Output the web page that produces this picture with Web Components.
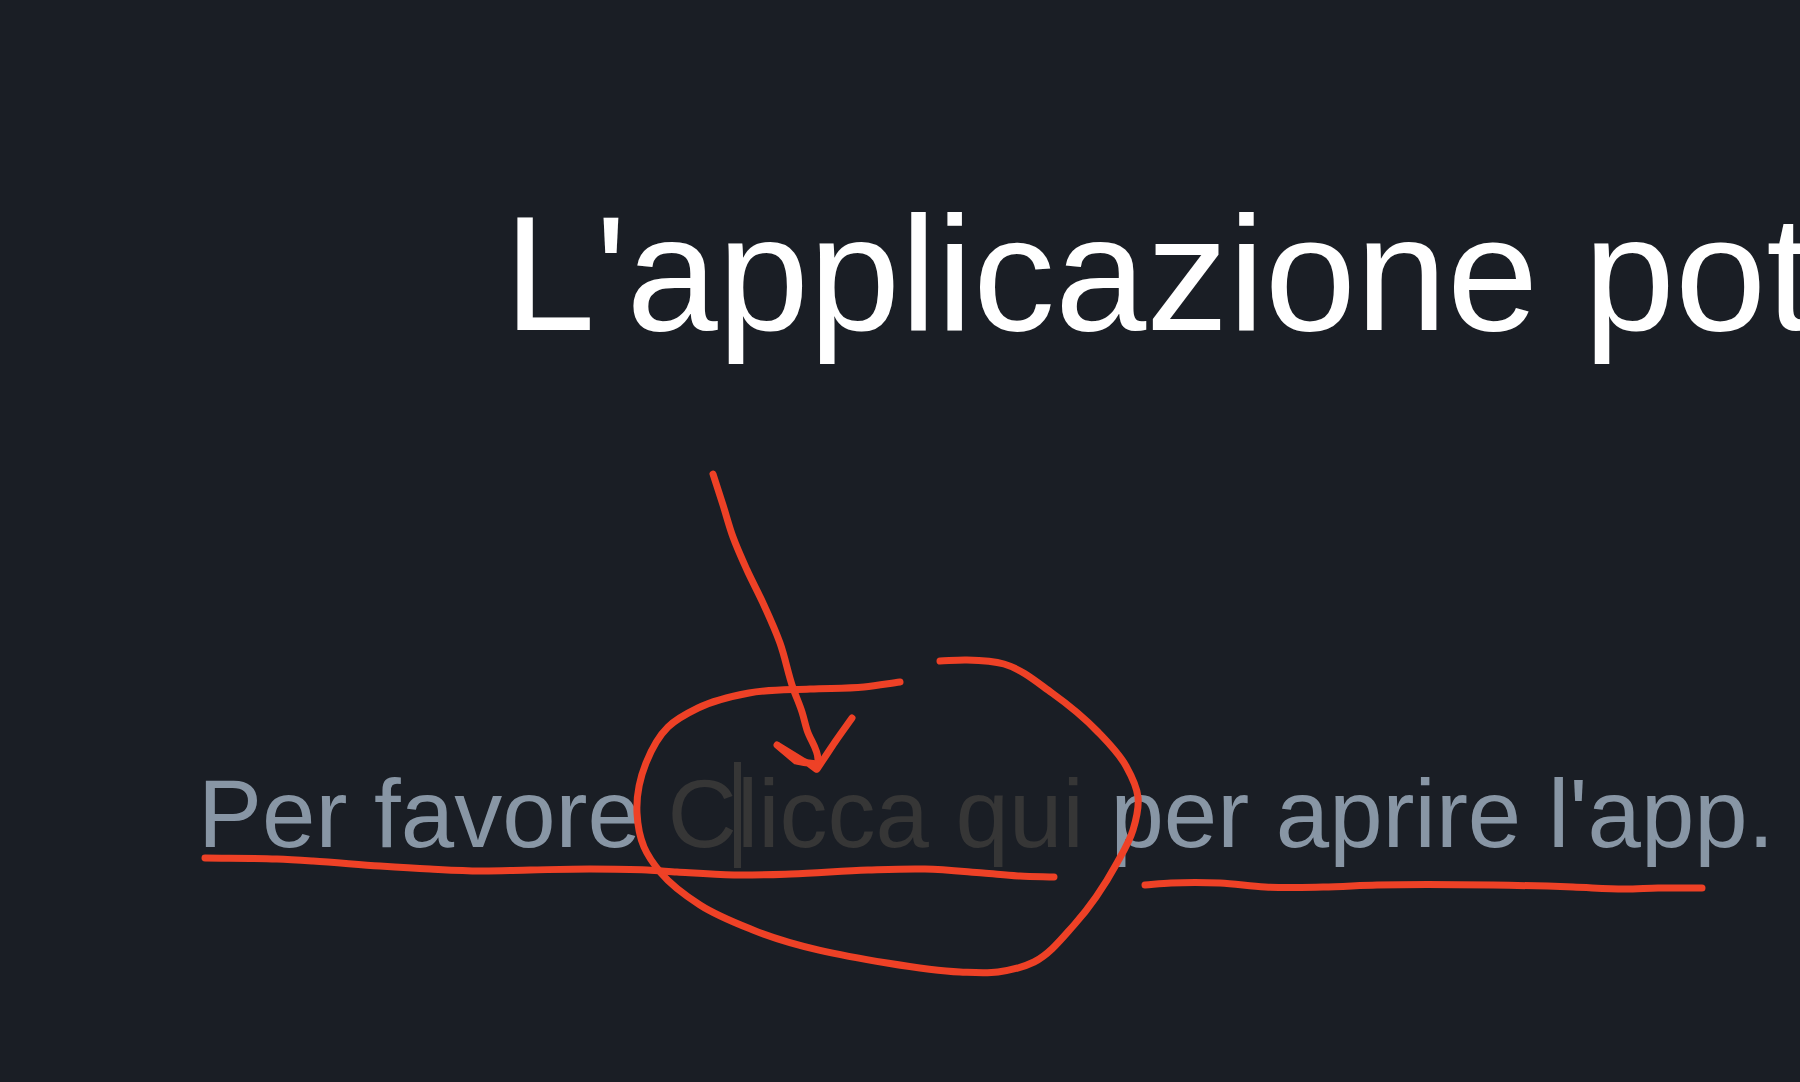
<!DOCTYPE html>
<html lang="it">
<head>
<meta charset="utf-8">
<meta name="viewport" content="width=device-width, initial-scale=1">
<title>Apri l'app</title>
<style>
  body { margin: 0; background: #1a1e25; font-family: "Liberation Sans", Arial, sans-serif; }
</style>
</head>
<body>
<launch-page>
  <launch-title slot="title">L'applicazione pot</launch-title>
  <launch-message slot="message" href="#apri"></launch-message>
  <ink-layer slot="ink"></ink-layer>
</launch-page>

<script>
class LaunchPage extends HTMLElement {
  constructor() {
    super();
    this.attachShadow({ mode: 'open' }).innerHTML = `
      <style>
        :host { display: block; position: relative; min-height: 100vh; overflow: hidden; background: #1a1e25; }
        main { display: flex; flex-direction: column; gap: 396px; padding-top: 184px; }
      </style>
      <main><slot name="title"></slot><slot name="message"></slot></main>
      <slot name="ink"></slot>`;
  }
}

class LaunchTitle extends HTMLElement {
  constructor() {
    super();
    this.attachShadow({ mode: 'open' }).innerHTML = `
      <style>
        :host { display: block; padding-left: 28vw; }
        h1 { margin: 0; font-size: 164px; line-height: 180px; font-weight: 400; color: #fff; white-space: nowrap; }
      </style>
      <h1><slot></slot></h1>`;
  }
}

class LaunchMessage extends HTMLElement {
  constructor() {
    super();
    this.attachShadow({ mode: 'open' }).innerHTML = `
      <style>
        :host { display: block; padding-left: 11vw; }
        p { margin: 0; font-size: 96px; line-height: 108px; color: #8896a5; white-space: nowrap; }
        a { position: relative; color: #363636; text-decoration: none; }
        .caret { position: absolute; left: 66px; top: 2px; width: 7px; height: 106px; background: #363636; }
      </style>
      <p>Per favore <a>Clicca qui<span class="caret" aria-hidden="true"></span></a> per aprire l'app.</p>`;
    this.shadowRoot.querySelector('a').href = this.getAttribute('href') || '#';
  }
}

/* Freehand strokes: each list of points becomes one smooth line. */
class InkLayer extends HTMLElement {
  static strokes = [
    [[940,661],[967,660],[1004,664],[1052,693],[1098,732],[1126,766],[1138,797],[1133,830],[1117,863],[1074,925],[1034,962],[998,972],[960,972],[887,963],[753,930],[700,905],[661,873],[644,847],[637,813],[646,763],[668,727],[698,708],[749,693],[810,689],[864,687],[900,682]],
    [[713,474],[723,505],[733,537],[747,570],[763,603],[780,643],[793,688],[802,712],[807,730],[818,760],[817,768]],
    [[852,718],[835,742],[825,757],[817,769]],
    [[205,858],[277,859],[313,861],[380,866],[430,869],[480,871],[530,870],[590,869],[647,870],[677,872],[734,875],[791,874],[868,870],[925,869],[983,873],[1020,876],[1054,877]],
    [[1145,885],[1171,883],[1220,883],[1265,887],[1323,887],[1377,885],[1493,885],[1573,887],[1625,889],[1658,888],[1702,888]]
  ];
  /* Tangents are weighted by chord length, so unevenly spaced points leave no kinks. */
  static smooth(p) {
    const n = p.length - 1;
    const len = i => Math.hypot(p[i + 1][0] - p[i][0], p[i + 1][1] - p[i][1]);
    const slope = (i, k) => (p[i + 1][k] - p[i][k]) / len(i);
    const tangent = (i, k) => {
      if (i === 0) return slope(0, k);
      if (i === n) return slope(n - 1, k);
      const a = len(i - 1), b = len(i);
      return (slope(i - 1, k) * b + slope(i, k) * a) / (a + b);
    };
    let d = `M${p[0]}`;
    for (let i = 0; i < n; i++) {
      const h = len(i) / 3;
      const c1 = [0, 1].map(k => p[i][k] + tangent(i, k) * h);
      const c2 = [0, 1].map(k => p[i + 1][k] - tangent(i + 1, k) * h);
      d += `C${c1} ${c2} ${p[i + 1]}`;
    }
    return d;
  }
  constructor() {
    super();
    const lines = InkLayer.strokes.map(s => `<path d="${InkLayer.smooth(s)}"/>`).join('');
    this.attachShadow({ mode: 'open' }).innerHTML = `
      <style>
        :host { display: block; position: absolute; inset: 0; pointer-events: none; }
        svg { display: block; width: 100%; height: auto; }
      </style>
      <svg viewBox="0 0 1800 1082" fill="none" stroke="#ee4126" stroke-width="7" stroke-linecap="round" stroke-linejoin="round" aria-hidden="true">
        ${lines}
        <path fill="#ee4126" d="M777 745L796 761Q799 762 808 763L816 769L817 764L809 763Q806 763 803 761Z"/>
      </svg>`;
  }
}

customElements.define('launch-page', LaunchPage);
customElements.define('launch-title', LaunchTitle);
customElements.define('launch-message', LaunchMessage);
customElements.define('ink-layer', InkLayer);
</script>
</body>
</html>
